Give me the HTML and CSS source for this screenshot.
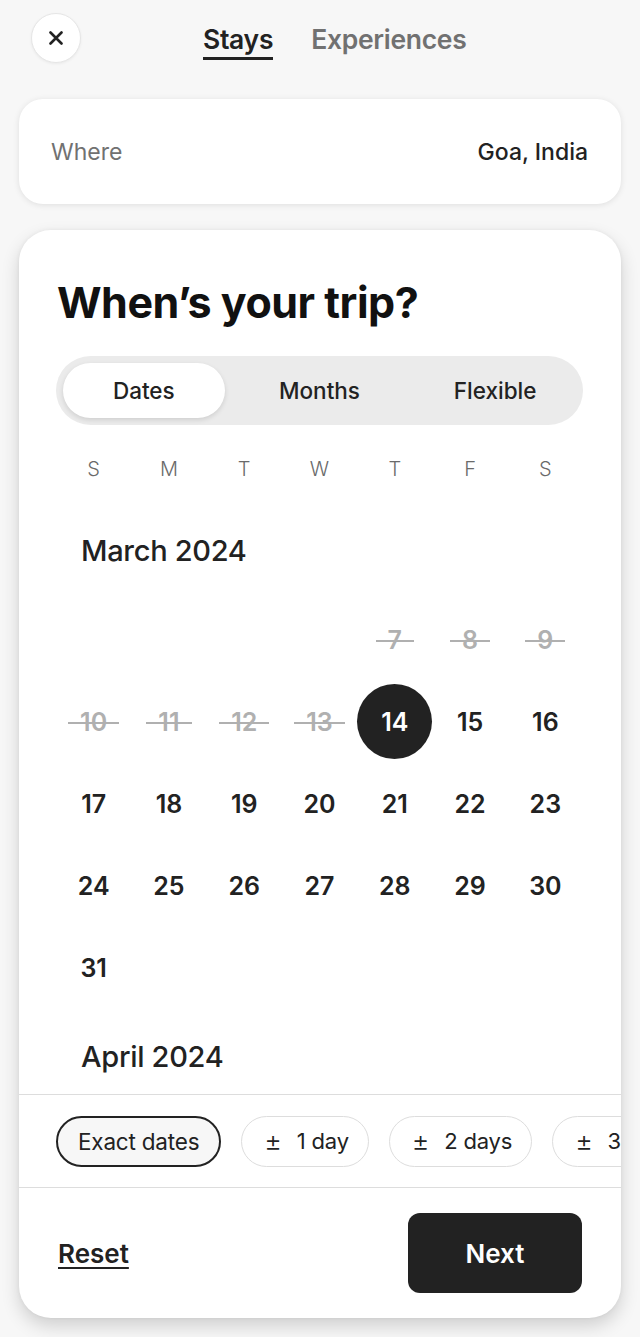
FILE: index.html
```html
<!DOCTYPE html>
<html lang="en">
<head>
<meta charset="utf-8">
<title>When's your trip?</title>
<link rel="stylesheet" href="styles.css">
</head>
<body>
<header class="top">
  <button class="close" aria-label="Close">
    <svg width="14" height="14" viewBox="0 0 14 14"><path d="M1.5 1.5 L12.5 12.5 M12.5 1.5 L1.5 12.5" stroke="#222" stroke-width="2.6" stroke-linecap="round" fill="none"/></svg>
  </button>
  <nav class="tabs">
    <span class="tab active">Stays</span>
    <span class="tab">Experiences</span>
  </nav>
</header>

<section class="where">
  <span class="where-label">Where</span>
  <span class="where-value">Goa, India</span>
</section>

<section class="card">
  <h1 class="title">When’s your trip?</h1>
  <div class="segment">
    <div class="seg-item"><span class="seg-pill">Dates</span></div>
    <div class="seg-item"><span class="seg-text">Months</span></div>
    <div class="seg-item"><span class="seg-text">Flexible</span></div>
  </div>
  <div class="weekdays">
    <span>S</span><span>M</span><span>T</span><span>W</span><span>T</span><span>F</span><span>S</span>
  </div>
  <div class="calendar">
    <div class="month">
      <h2 class="month-title">March 2024</h2>
      <div class="days">
        <div class="day"></div><div class="day"></div><div class="day"></div><div class="day"></div>
        <div class="day"><span class="past">7</span></div>
        <div class="day"><span class="past">8</span></div>
        <div class="day"><span class="past">9</span></div>
        <div class="day"><span class="past">10</span></div>
        <div class="day"><span class="past">11</span></div>
        <div class="day"><span class="past">12</span></div>
        <div class="day"><span class="past">13</span></div>
        <div class="day"><span class="selected">14</span></div>
        <div class="day"><span>15</span></div>
        <div class="day"><span>16</span></div>
        <div class="day"><span>17</span></div>
        <div class="day"><span>18</span></div>
        <div class="day"><span>19</span></div>
        <div class="day"><span>20</span></div>
        <div class="day"><span>21</span></div>
        <div class="day"><span>22</span></div>
        <div class="day"><span>23</span></div>
        <div class="day"><span>24</span></div>
        <div class="day"><span>25</span></div>
        <div class="day"><span>26</span></div>
        <div class="day"><span>27</span></div>
        <div class="day"><span>28</span></div>
        <div class="day"><span>29</span></div>
        <div class="day"><span>30</span></div>
        <div class="day"><span>31</span></div>
      </div>
    </div>
    <div class="month">
      <h2 class="month-title">April 2024</h2>
    </div>
  </div>
  <div class="chips">
    <span class="chip chip-active">Exact dates</span>
    <span class="chip"><span class="pm">±</span>1 day</span>
    <span class="chip"><span class="pm">±</span>2 days</span>
    <span class="chip"><span class="pm">±</span>3 days</span>
  </div>
  <footer class="footer">
    <a class="reset" href="#">Reset</a>
    <button class="next">Next</button>
  </footer>
</section>
</body>
</html>
```

FILE: styles.css
```css
* { box-sizing: border-box; }
html, body { margin: 0; padding: 0; }
body {
  background: #f7f7f7;
  font-family: Inter, "Noto Sans", "Liberation Sans", sans-serif;
  color: #222;
  padding: 0 19px 19px;
  width: 640px;
  height: 1337px;
  overflow: hidden;
}

.top {
  display: flex;
  align-items: flex-start;
  padding-top: 13px;
  height: 99px;
}
.close {
  width: 50px;
  height: 50px;
  margin-left: 12px;
  border-radius: 50%;
  border: 1px solid #e6e6e6;
  background: #fff;
  display: flex;
  align-items: center;
  justify-content: center;
  padding: 0;
  box-shadow: 0 1px 3px rgba(0,0,0,0.06);
}
.tabs {
  display: flex;
  gap: 38px;
  margin-left: 122px;
  margin-top: 9px;
}
.tab {
  font-size: 26.5px;
  line-height: 34px;
  font-weight: 600;
  color: #717171;
  padding-bottom: 1px;
  border-bottom: 3px solid transparent;
  letter-spacing: -0.3px;
}
.tab.active {
  color: #222;
  border-bottom-color: #222;
}

.where {
  height: 105px;
  background: #fff;
  border-radius: 24px;
  box-shadow: 0 1px 6px rgba(0,0,0,0.1);
  display: flex;
  align-items: center;
  justify-content: space-between;
  padding: 0 33px 0 32px;
  font-size: 23px;
}
.where-label { color: #717171; }
.where-value { color: #222; font-weight: 500; }

.card {
  margin-top: 26px;
  height: 1088px;
  background: #fff;
  border-radius: 32px;
  box-shadow: 0 8px 18px rgba(0,0,0,0.16), 0 0 4px rgba(0,0,0,0.06);
  overflow: hidden;
  display: flex;
  flex-direction: column;
  padding-top: 46px;
}
.title {
  margin: 0 37px 0 38px;
  font-size: 43px;
  line-height: 52px;
  font-weight: 700;
  letter-spacing: -0.5px;
  color: #111;
}
.segment {
  margin: 28px 38px 0 37px;
  height: 69px;
  background: #ebebeb;
  border-radius: 35px;
  display: grid;
  grid-template-columns: repeat(3, 1fr);
  font-size: 22.5px;
  font-weight: 500;
}
.seg-item {
  display: flex;
  align-items: center;
  justify-content: center;
  padding: 7px;
}
.seg-pill {
  width: 100%;
  height: 100%;
  background: #fff;
  border-radius: 28px;
  display: flex;
  align-items: center;
  justify-content: center;
  box-shadow: 0 2px 5px rgba(0,0,0,0.12);
}
.weekdays {
  margin: 20px 38px 0 37px;
  height: 48px;
  display: grid;
  grid-template-columns: repeat(7, 1fr);
  align-items: center;
  justify-items: center;
  font-size: 20px;
  font-weight: 300;
  color: #6a6a6a;
}
.calendar {
  height: 602px;
  overflow: hidden;
  padding: 10px 38px 0 37px;
}
.month-title {
  margin: 28px 0 28px 25px;
  font-size: 29px;
  line-height: 40px;
  font-weight: 500;
  letter-spacing: -0.3px;
}
.days {
  display: grid;
  grid-template-columns: repeat(7, 1fr);
  grid-auto-rows: 82px;
}
.day {
  display: flex;
  align-items: center;
  justify-content: center;
  font-size: 25px;
  font-weight: 600;
}
.past {
  color: #b0b0b0;
  padding: 0 12px;
  background: linear-gradient(#b0b0b0, #b0b0b0) 0 55% / 100% 2px no-repeat;
}
.selected {
  width: 75px;
  height: 75px;
  border-radius: 50%;
  background: #222;
  color: #fff;
  display: flex;
  align-items: center;
  justify-content: center;
}

.chips {
  border-top: 1px solid #dddddd;
  height: 93px;
  display: flex;
  align-items: center;
  gap: 20px;
  padding-left: 37px;
  overflow: hidden;
  white-space: nowrap;
  flex-shrink: 0;
}
.chip {
  flex-shrink: 0;
  height: 51px;
  border: 1px solid #dddddd;
  border-radius: 26px;
  display: flex;
  align-items: center;
  padding: 0 19px 0 22px;
  font-size: 22px;
  font-weight: 400;
  letter-spacing: -0.2px;
  background: #fff;
}
.chip-active {
  border: 2px solid #222;
  background: #f7f7f7;
  font-size: 22.5px;
  padding: 0 20px;
}
.pm {
  font-size: 27px;
  font-weight: 300;
  margin-right: 15px;
  line-height: 1;
}

.footer {
  border-top: 1px solid #dddddd;
  height: 131px;
  display: flex;
  align-items: center;
  justify-content: space-between;
  padding: 0 39px 0 39px;
  flex-shrink: 0;
}
.reset {
  color: #222;
  font-size: 26px;
  font-weight: 600;
  text-decoration: underline;
  text-decoration-thickness: 2px;
  text-underline-offset: 4px;
}
.next {
  width: 174px;
  height: 80px;
  border: none;
  border-radius: 12px;
  background: #222;
  color: #fff;
  font-family: inherit;
  font-size: 26px;
  font-weight: 600;
}
```
